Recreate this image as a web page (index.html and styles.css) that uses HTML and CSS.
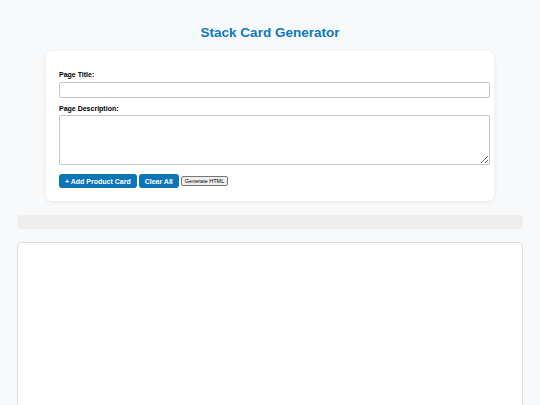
FILE: index.html
```html
<!DOCTYPE html>
<html>
<head>
<meta charset="utf-8">
<link rel="stylesheet" href="styles.css">
</head>
<body>
<h1 class="title">Stack Card Generator</h1>
<div class="form-card">
  <div class="group">
    <label class="label">Page Title:</label>
    <input class="field" type="text">
  </div>
  <div class="group">
    <label class="label">Page Description:</label>
    <textarea class="field area"></textarea>
  </div>
  <div class="actions">
    <button class="btn">+ Add Product Card</button>
    <button class="btn">Clear All</button>
    <button class="plain">Generate HTML</button>
  </div>
</div>
<div class="bar"></div>
<div class="preview"></div>
</body>
</html>
```
FILE: styles.css
```css
html, body { margin: 0; }
body {
  background: #f8f9fa;
  font-family: "Liberation Sans", Arial, sans-serif;
  padding: 0 17px;
  overflow: hidden;
  height: 405px;
  box-sizing: border-box;
}
.title {
  margin: 24px 0 9px;
  text-align: center;
  font-size: 13.5px;
  line-height: 18px;
  color: #0b78bd;
  font-weight: bold;
}
.form-card {
  width: 448px;
  box-sizing: border-box;
  margin: 0 auto;
  background: #fff;
  border-radius: 6px;
  box-shadow: 0 1px 5px rgba(0,0,0,0.08);
  padding: 20px 13px 13px;
}
.group { margin-bottom: 7px; }
.group + .group { margin-bottom: 9px; }
.label {
  display: block;
  font-size: 7px;
  line-height: 8px;
  font-weight: bold;
  color: #000;
  margin-bottom: 3px;
}
.group + .group .label { margin-bottom: 2px; }
.field {
  display: block;
  width: 100%;
  height: 14px;
  padding: 0 3.5px;
  border: 1px solid #c6c6c6;
  border-radius: 2px;
  margin: 0;
  font-family: inherit;
  font-size: 7px;
}
.area { height: 48px; resize: vertical; }
.actions { display: flex; align-items: center; gap: 2px; }
.btn {
  background: #0b75b8;
  color: #fff;
  border: none;
  border-radius: 3px;
  font-family: inherit;
  font-weight: bold;
  font-size: 7px;
  height: 14px;
  padding: 0 6px;
  margin: 0;
}
.plain {
  font-family: inherit;
  font-size: 5.5px;
  height: 10px;
  padding: 0 3px;
  margin: 0;
  background: #efefef;
  border: 1px solid #767676;
  border-radius: 2px;
  color: #000;
}
.bar {
  height: 14px;
  background: #eeeeee;
  border-radius: 3px;
  margin: 14px 0 13px;
}
.preview {
  height: 170px;
  background: #fff;
  border: 1px solid #dddddd;
  border-radius: 4px;
}
```
